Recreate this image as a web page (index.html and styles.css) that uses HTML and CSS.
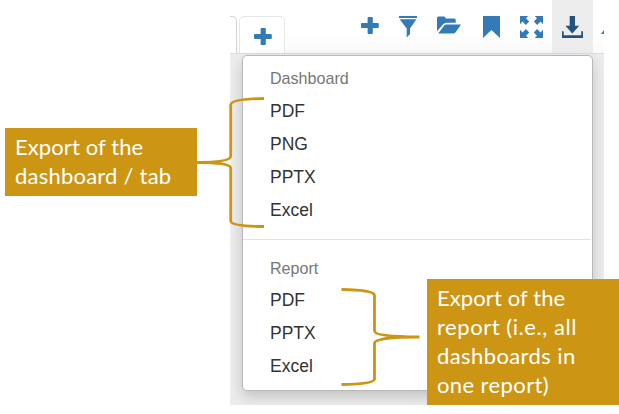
FILE: index.html
```html
<!DOCTYPE html>
<html lang="en">
<head>
<meta charset="utf-8">
<title>Export menu</title>
<link rel="stylesheet" href="styles.css">
</head>
<body>
<div class="figure">
  <div class="app">
    <header class="toolbar">
      <div class="tabs">
        <div class="tab tab-cut"></div>
        <div class="tab tab-add"><svg width="18" height="17" viewBox="0 0 18 17"><path d="M7.6 0h3.2q1 0 1 1v5h5q1 0 1 1v3q0 1-1 1h-5v5q0 1-1 1H7.6q-1 0-1-1v-5H1q-1 0-1-1V7q0-1 1-1h5.6V1q0-1 1-1z"/></svg></div>
      </div>
      <nav class="tools">
        <button class="tool plus"><svg width="18" height="17" viewBox="0 0 18 17"><path d="M7.6 0h3.2q1 0 1 1v5h5q1 0 1 1v3q0 1-1 1h-5v5q0 1-1 1H7.6q-1 0-1-1v-5H1q-1 0-1-1V7q0-1 1-1h5.600V1q0-1 1-1z"/></svg></button>
        <button class="tool filter"><svg width="18" height="22" viewBox="0 0 18 22"><path d="M0 0h18v2H0zM.6 3.300h16.800L11 12.500V18l-3.300 3.600V12.500z"/></svg></button>
        <button class="tool folder"><svg width="24" height="18" viewBox="0 0 24 18"><path d="M0 15.300V2q0-1.500 1.500-1.500H7q1.500 0 1.600 2h8.600q1.500 0 1.500 1.500v2.700H9.500q-2 0-3.300 1.500z"/><path d="M1.200 17.600 7 9.700q.9-1.200 2.500-1.200h14.100q.5 0 .2.600l-5.400 7.400q-.8 1.100-2.200 1.100z"/></svg></button>
        <button class="tool bookmark"><svg width="17" height="22" viewBox="0 0 17 22"><path d="M0 0h17v22l-8.500-8L0 22z"/></svg></button>
        <button class="tool expand"><svg width="23" height="22" viewBox="0 0 23 22"><g id="corner"><path d="M0 0h8.200L6 2.300l3.200 3.300-3.300 3.300-3.400-3.300L0 8.200z"/></g><use href="#corner" transform="translate(23 0) scale(-1 1)"/><use href="#corner" transform="translate(0 22) scale(1 -1)"/><use href="#corner" transform="translate(23 22) scale(-1 -1)"/></svg></button>
        <button class="tool download"><svg width="21" height="22" viewBox="0 0 21 22"><path d="M7.700 0h5.300v9.800h4.200l-6.900 7.700-6.900-7.700h4.300zM0 15.300h1.700v3.900h17.600v-3.900H21V22H0z"/></svg></button>
        <button class="tool cut"><svg width="20" height="22" viewBox="0 0 20 22"><path d="M0 18 6 10v8z"/></svg></button>
      </nav>
    </header>
    <div class="menu">
      <section class="group">
        <h2>Dashboard</h2>
        <a>PDF</a><a>PNG</a><a>PPTX</a><a>Excel</a>
      </section>
      <section class="group">
        <h2>Report</h2>
        <a>PDF</a><a>PPTX</a><a>Excel</a>
      </section>
    </div>
  </div>
  <svg class="brace brace-left" width="70" height="134" viewBox="195 95 70 134"><path d="M264 98.500Q230.700 99 230.700 105V156Q230.700 162.300 197 162.500Q230.700 162.700 230.700 168V221Q230.700 226.200 264 226.500"/></svg>
  <svg class="brace brace-right" width="80" height="102" viewBox="340 286 80 102"><path d="M341.500 289.500Q374.500 290 374.500 295.500V331Q374.500 337 419.500 337Q374.500 337 374.500 343V379Q374.500 384 341.500 384.500"/></svg>
  <div class="callout callout-left"><span class="tight">Export of the</span><span class="slash">dashboard / tab</span></div>
  <div class="callout callout-right"><span class="tight">Export of the</span><span class="loose">report (i.e., all</span><span class="even">dashboards in</span><span class="even">one report)</span></div>
</div>
</body>
</html>
```
FILE: styles.css
```css
* { box-sizing: border-box; }
body { margin: 0; background: #fff; font-family: "Liberation Sans", Arial, sans-serif; }
.figure { position: relative; width: 619px; height: 414px; overflow: hidden; }
.app { position: relative; width: 374px; height: 405px; margin-left: 230px; background: #ededed; overflow: hidden; }
.toolbar { display: flex; height: 54px; background: linear-gradient(#fff 60%, #fafafa); border-bottom: 1px solid #dcdcdc; }
.tabs { display: flex; flex: none; width: 121px; gap: 2px; padding-top: 16px; }
.tab { border: 1px solid #e6e6e6; border-bottom: 0; border-radius: 5px 5px 0 0; background: #fff; }
.tab-cut { width: 7px; border-left: 0; border-color: #d4d4d4; border-radius: 0 5px 0 0; }
.tab-add { width: 46px; padding: 11px 0 0 14px; }
.toolbar svg { display: block; flex: none; fill: #337ab7; }
.tools { display: flex; flex: none; }
.tool { flex: none; height: 53px; padding: 16px 0 0 10px; border: 0; background: none; display: flex; align-items: flex-start; }
.plus { width: 38px; padding: 17px 0 0 9.5px; }
.filter { width: 38px; }
.folder { width: 45px; }
.bookmark { width: 39px; padding-left: 11px; }
.expand { width: 41px; padding-left: 8.5px; }
.download { width: 41px; background: #ededed; }
.toolbar .download svg { fill: #23527c; }
.cut { padding-left: 8px; width: 30px; }
.menu { position: absolute; left: 12px; top: 55px; width: 351px; height: 336px; background: #fff; border: 1px solid #b8b8b8; border-radius: 5px; box-shadow: 0 6px 14px rgba(0,0,0,.18); padding-top: 6px; }
.group { padding: 0 27px; }
.group + .group { margin: 12px 1px 0 0; border-top: 1px solid #e3e3e3; padding-top: 12px; }
.group h2 { margin: 0; font-size: 16.1px; font-weight: 400; line-height: 33px; color: #777; }
.group + .group h2 { line-height: 32px; }
.group a { display: block; font-size: 17.5px; line-height: 33px; color: #333; }
.brace { position: absolute; fill: none; stroke: #cc9614; stroke-width: 2.8; }
.brace-left { left: 195px; top: 95px; }
.brace-right { left: 340px; top: 286px; }
.callout { position: absolute; width: 192px; padding: 4px 10px; background: #cc9614; color: #fff; font: 400 22px/29px Lato, sans-serif; white-space: nowrap; }
.callout span { display: block; }
.tight { letter-spacing: .1px; }
.slash { letter-spacing: .22px; }
.loose { letter-spacing: .55px; }
.even { letter-spacing: .4px; }
.callout-left { left: 5px; top: 128px; height: 68px; }
.callout-right { left: 427px; top: 279px; height: 126px; }
```
